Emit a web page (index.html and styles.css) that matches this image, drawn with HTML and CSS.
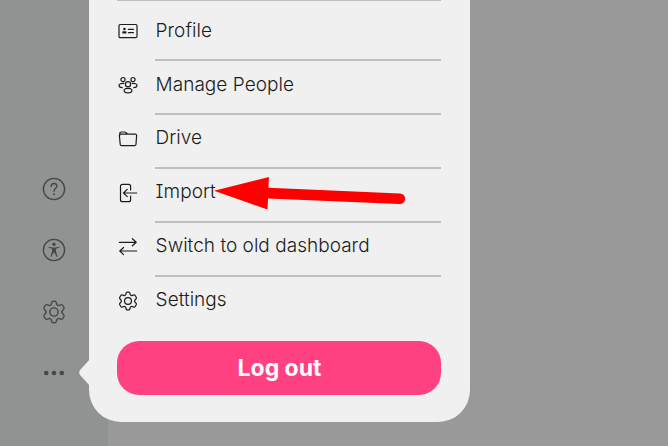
FILE: index.html
```html
<!DOCTYPE html>
<html lang="en">
<head>
    <meta charset="UTF-8">
    <meta name="viewport" content="width=device-width, initial-scale=1.0">
    <title>Dashboard</title>
    <link rel="stylesheet" href="styles.css">
</head>
<body>
    <!-- Gear shape, used in the sidebar and in the menu -->
    <svg class="defs" width="0" height="0">
        <symbol id="gear" viewBox="0 0 24 24">
            <path d="M9.6 2.9Q9.9 1.3 11.2 1.3H12.8Q14.1 1.3 14.4 2.9L14.7 4.2Q15 5 15.9 5.4Q16.6 5.6 17.3 5.3L18.6 4.8Q19.9 4.3 20.6 5.4L21.9 7.5Q22.5 8.7 21.5 9.6L20.6 10.4Q19.1 12 20.6 13.6L21.5 14.4Q22.5 15.3 21.9 16.5L20.6 18.6Q19.9 19.7 18.6 19.2L17.3 18.7Q16.6 18.4 15.9 18.6Q15 19 14.7 19.8L14.4 21.1Q14.1 22.7 12.8 22.7H11.2Q9.9 22.7 9.6 21.1L9.3 19.8Q9 19 8.1 18.6Q7.4 18.4 6.7 18.7L5.4 19.2Q4.1 19.7 3.4 18.6L2.1 16.5Q1.5 15.3 2.5 14.4L3.4 13.6Q4.9 12 3.4 10.4L2.5 9.6Q1.5 8.7 2.1 7.5L3.4 5.4Q4.1 4.3 5.4 4.8L6.7 5.3Q7.4 5.6 8.1 5.4Q9 5 9.3 4.2Z"/>
            <circle cx="12" cy="12" r="4.1"/>
        </symbol>
    </svg>

    <div class="page">
        <nav class="sidebar">
            <svg class="side-icon" viewBox="0 0 24 24">
                <circle cx="12" cy="12" r="10.6"/>
                <path d="M9.2 9.4C9.2 7.5 10.4 6.5 12 6.5S14.9 7.6 14.9 9.2C14.9 11.2 12 11.5 12 14.2"/>
                <circle class="fill" cx="12" cy="17.2" r="1"/>
            </svg>
            <svg class="side-icon" viewBox="0 0 24 24">
                <circle cx="12" cy="12" r="10.6"/>
                <circle class="fill" cx="12" cy="6.3" r="1.7"/>
                <path class="fill" d="M6.4 8.8L10.6 9.6H13.4L17.6 8.8V9.5L14 10.8V13.5L15.5 18.6L14.7 18.9L12.3 14.5H11.7L9.3 18.9L8.5 18.6L10 13.5V10.8L6.4 9.5Z"/>
            </svg>
            <svg class="side-icon"><use href="#gear"/></svg>
            <svg class="side-icon" viewBox="0 0 24 24">
                <circle class="dot" cx="4.2" cy="12" r="2.3"/>
                <circle class="dot" cx="12" cy="12" r="2.3"/>
                <circle class="dot" cx="19.8" cy="12" r="2.3"/>
            </svg>
        </nav>

        <div class="menu">
            <svg class="menu-tip" viewBox="0 0 11 30">
                <path d="M11 1L1.5 11.5Q-1 14.5 1.5 17.5L11 28Z"/>
            </svg>
            <ul class="menu-list">
                <li>
                    <svg class="icon" viewBox="0 0 20 20">
                        <rect x="1" y="3.5" width="18" height="13.2" rx="1.2"/>
                        <circle class="fill" cx="6.4" cy="8" r="1.3"/>
                        <rect class="fill" x="4.3" y="10.2" width="4.2" height="2.3" rx=".9"/>
                        <path d="M10.4 8.4H15.4M10.4 11.7H15.4"/>
                    </svg>
                    <span>Profile</span>
                </li>
                <li>
                    <svg class="icon" viewBox="0 0 20 20">
                        <circle cx="5" cy="4.6" r="2.1"/>
                        <circle cx="15" cy="4.6" r="2.1"/>
                        <circle cx="10" cy="9.2" r="2.6"/>
                        <path d="M5.8 8.4C3 8.1 1 9 1 10.6C1 12 2.4 12.6 4.2 12.7M14.2 8.4C17 8.1 19 9 19 10.6C19 12 17.6 12.6 15.8 12.7"/>
                        <path d="M7.4 13.7C5.3 14.6 5.3 17.9 10 17.9S14.7 14.6 12.6 13.7Q10 13.1 7.4 13.7Z"/>
                    </svg>
                    <span>Manage People</span>
                </li>
                <li>
                    <svg class="icon" viewBox="0 0 20 20">
                        <path d="M1.7 6.5V4.8Q1.7 3 3.4 3H6.5Q7.4 3 8.2 3.8L9.8 5.2H17.2Q18.7 5.2 18.6 6.7L18 15.2Q17.9 16.7 16.4 16.7H3.7Q2.3 16.7 2.2 15.2L1.4 6.8Q1.3 5.2 2.8 5.2H9.8"/>
                    </svg>
                    <span>Drive</span>
                </li>
                <li>
                    <svg class="icon" viewBox="0 0 20 20">
                        <path d="M12.6 7V3.3Q12.6 1.3 10.6 1.3H4.5Q2.5 1.3 2.5 3.3V16.7Q2.5 18.7 4.5 18.7H10.6Q12.6 18.7 12.6 16.7V13M18.7 10H5.6M9.2 6.4L5.5 10L9.2 13.6"/>
                    </svg>
                    <span>Import</span>
                </li>
                <li>
                    <svg class="icon" viewBox="0 0 20 20">
                        <path d="M1.3 5.3H18M14.4 1.7L18.2 5.3L14.4 8.8M18.7 14H2M5.6 10.5L1.8 14L5.6 17.6"/>
                    </svg>
                    <span>Switch to old dashboard</span>
                </li>
                <li>
                    <svg class="icon gear"><use href="#gear"/></svg>
                    <span>Settings</span>
                </li>
            </ul>
            <button class="logout">Log out</button>
        </div>

        <svg class="pointer" viewBox="0 0 192 34">
            <path d="M0 13.8L55 0L54.4 10.8L186 16.4A5.3 5.3 0 0 1 185.6 27.1L54 21.4L53.5 32.6Z"/>
        </svg>
    </div>
</body>
</html>
```
FILE: styles.css
```css
* {
    box-sizing: border-box;
}
body {
    margin: 0;
    font-family: Inter, 'Liberation Sans', sans-serif;
    background: #999999;
    overflow: hidden;
}
.defs {
    display: block;
}
.page {
    position: relative;
    height: 446px;
}
.sidebar {
    width: 108px;
    height: 446px;
    padding-top: 177px;
    padding-left: 42px;
    display: flex;
    flex-direction: column;
    gap: 37.4px;
    background: #909391;
}
.side-icon {
    display: block;
    flex-shrink: 0;
    width: 24px;
    height: 24px;
    fill: none;
    stroke: #484848;
    stroke-width: 1.4;
    stroke-linecap: round;
}
.side-icon .fill,
.side-icon .dot {
    fill: #484848;
    stroke: none;
}
.menu {
    position: absolute;
    left: 89px;
    top: 0;
    width: 381px;
    height: 422px;
    padding: 0 29px 27px 28px;
    background: #f0f0f0;
    border-radius: 0 0 32px 32px;
}
.menu-tip {
    position: absolute;
    left: -10.5px;
    top: 358px;
    width: 11px;
    height: 30px;
    fill: #f0f0f0;
}
.menu-list {
    margin: 0;
    padding: 6px 0 0;
    border-top: 1px solid #bfbfbf;
    list-style: none;
}
.menu-list li {
    display: flex;
    align-items: center;
    height: 54px;
    color: #1c1c1c;
    font-size: 19px;
    font-weight: 300;
    font-feature-settings: "cv08";
    letter-spacing: 0.03px;
}
.menu-list span {
    flex: 1;
    height: 54px;
    padding-bottom: 6px;
    line-height: 46px;
    text-indent: 0.6px;
    border-bottom: 2px solid #bfbfbf;
}
.menu-list li:nth-child(-n+2) span {
    line-height: 48px;
}
.menu-list li:last-child span {
    border-bottom: none;
}
.icon {
    width: 20px;
    height: 20px;
    margin-left: 1px;
    margin-right: 17px;
    margin-bottom: 6px;
    fill: none;
    stroke: #1c1c1c;
    stroke-width: 1.2;
    stroke-linecap: round;
    stroke-linejoin: round;
}
.icon .fill {
    fill: #1c1c1c;
    stroke: none;
}
.icon.gear {
    stroke-width: 1.5;
}
.logout {
    display: block;
    width: 324px;
    height: 54px;
    margin-top: 10px;
    padding: 0 0 0 1px;
    border: none;
    border-radius: 22px;
    background: #ff4081;
    color: white;
    font-family: inherit;
    font-size: 23px;
    font-weight: 700;
}
.pointer {
    position: absolute;
    left: 214px;
    top: 177px;
    width: 192px;
    height: 34px;
    fill: #ff0000;
}
```
